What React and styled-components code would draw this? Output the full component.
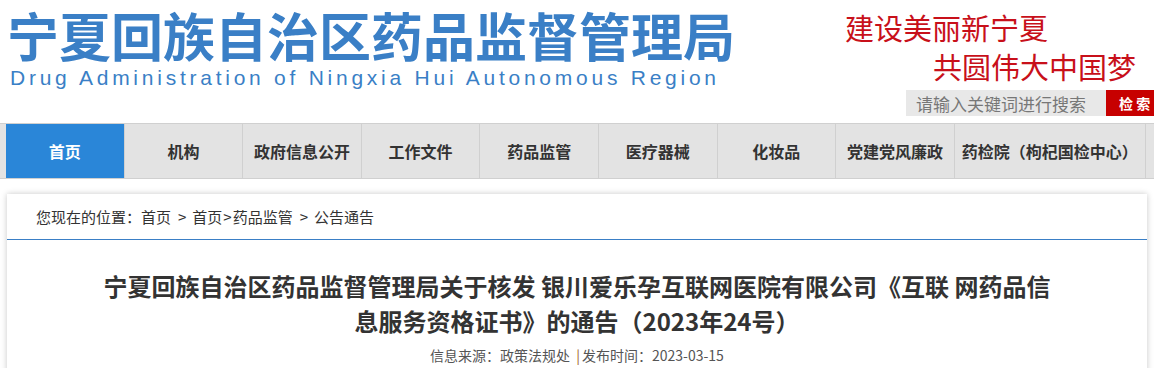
import styled, { createGlobalStyle } from "styled-components"

const GlobalStyle = createGlobalStyle`
  body {
    margin: 0;
    background: #fff;
    font-family: "Noto Sans CJK SC", "Noto Sans", sans-serif;
    color: #333;
  }
`

const navItems = [
  "首页",
  "机构",
  "政府信息公开",
  "工作文件",
  "药品监管",
  "医疗器械",
  "化妆品",
  "党建党风廉政",
  "药检院（枸杞国检中心）",
]

export default function App() {
  return (
    <Page>
      <GlobalStyle />
      <Header>
        <Brand>
          <SiteName>宁夏回族自治区药品监督管理局</SiteName>
          <SiteNameEn>Drug Administration of Ningxia Hui Autonomous Region</SiteNameEn>
        </Brand>
        <HeaderRight>
          <Slogan>建设美丽新宁夏</Slogan>
          <Slogan indent>共圆伟大中国梦</Slogan>
          <Search>
            <SearchInput placeholder="请输入关键词进行搜索" />
            <SearchButton>检 索</SearchButton>
          </Search>
        </HeaderRight>
      </Header>

      <Nav>
        {navItems.map((item, i) => (
          <NavItem key={item} active={i === 0} wide={i === navItems.length - 1}>
            {item}
          </NavItem>
        ))}
      </Nav>

      <Card>
        <Crumbs>
          您现在的位置：首页<Arrow spaced>&gt;</Arrow>首页<Arrow>&gt;</Arrow>药品监管
          <Arrow spaced>&gt;</Arrow>公告通告
        </Crumbs>
        <Title>
          宁夏回族自治区药品监督管理局关于核发 银川爱乐孕互联网医院有限公司《互联 网药品信
          <br />
          息服务资格证书》的通告（2023年24号）
        </Title>
        <Meta>
          信息来源：政策法规处 <Sep>|</Sep>发布时间：2023-03-15
        </Meta>
      </Card>
    </Page>
  )
}

const Page = styled.div`
  width: 1154px;
  height: 368px;
  overflow: hidden;
`
const Header = styled.header`
  display: flex;
  justify-content: space-between;
  height: 123px;
`
const Brand = styled.div`
  padding: 4px 0 0 7px;
`
const SiteName = styled.h1`
  margin: 0;
  font-size: 52px;
  line-height: 62px;
  font-weight: 700;
  color: #3a7fc6;
  white-space: nowrap;
`
const SiteNameEn = styled.div`
  font-family: "Liberation Sans", Arial, sans-serif;
  font-size: 21px;
  line-height: 24px;
  letter-spacing: 3.75px;
  color: #3a7fc6;
  padding-left: 3px;
  white-space: nowrap;
`
const HeaderRight = styled.div`
  width: 309px;
  display: flex;
  flex-direction: column;
  padding-top: 8px;
`
const Slogan = styled.div`
  font-size: 29px;
  line-height: 39px;
  color: #c8101a;
  padding-left: ${(p) => (p.indent ? "88px" : "0")};
  white-space: nowrap;
`
const Search = styled.div`
  display: flex;
  justify-content: flex-end;
  margin-top: 4px;
  height: 26px;
`
const SearchInput = styled.input`
  width: 200px;
  box-sizing: border-box;
  border: none;
  outline: none;
  background: #e8e8e8;
  padding: 0 10px;
  font-family: "Noto Sans CJK SC", sans-serif;
  font-size: 17px;
  &::placeholder {
    color: #777;
  }
`
const SearchButton = styled.button`
  width: 48px;
  border: none;
  background: #c70000;
  color: #fff;
  font-family: "Noto Sans CJK SC", sans-serif;
  font-size: 14px;
  font-weight: 700;
  padding: 0 0 0 13px;
  text-align: left;
  white-space: nowrap;
`
const Nav = styled.nav`
  display: flex;
  height: 54px;
  padding-left: 6px;
  background: #e3e3e3;
  border-top: 1px solid #d0d0d0;
  border-bottom: 1px solid #d0d0d0;
`
const NavItem = styled.a`
  display: flex;
  align-items: center;
  justify-content: center;
  width: ${(p) => (p.wide ? "190px" : "117.6px")};
  border-right: 1px solid #d0d0d0;
  font-size: 16px;
  font-weight: 700;
  color: ${(p) => (p.active ? "#fff" : "#333")};
  background: ${(p) => (p.active ? "#2a86d8" : "transparent")};
  white-space: nowrap;
`
const Card = styled.main`
  margin: 15px 7px 0 7px;
  background: #fff;
  box-shadow: 0 0 6px rgba(0, 0, 0, 0.22);
  height: 200px;
`
const Crumbs = styled.div`
  height: 45px;
  line-height: 45px;
  padding-left: 29px;
  font-size: 15px;
  color: #333;
  border-bottom: 1px solid #3a7fc6;
`
const Arrow = styled.span`
  margin: ${(p) => (p.spaced ? "0 6px 0 7px" : "0 1px")};
`
const Title = styled.h2`
  margin: 28px 0 0;
  text-align: center;
  font-size: 24px;
  line-height: 35px;
  font-weight: 700;
  color: #333;
`
const Meta = styled.div`
  margin-top: 7px;
  text-align: center;
  font-size: 14px;
  line-height: 20px;
  color: #555;
`
const Sep = styled.span`
  color: #a0602a;
  margin: 0 2px 0 3px;
`
